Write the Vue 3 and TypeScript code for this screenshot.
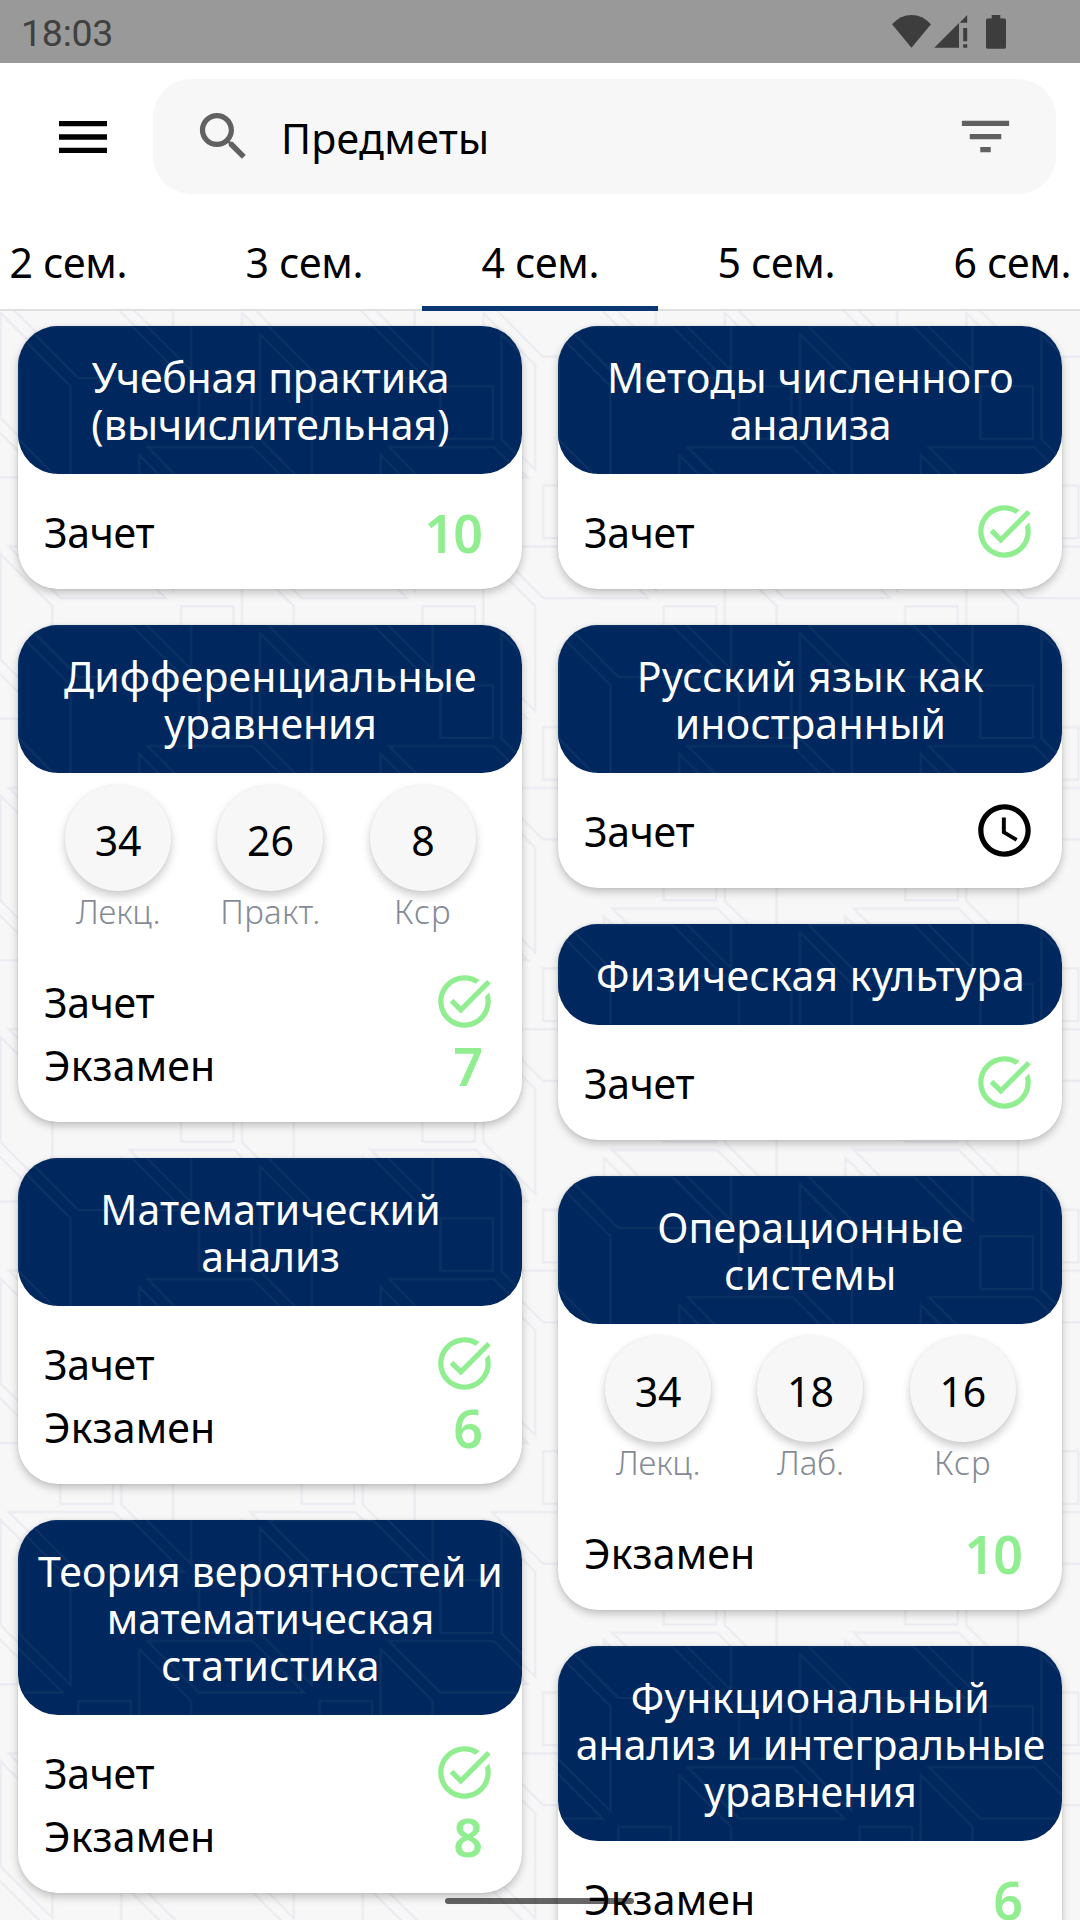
<script setup lang="ts">
interface Line { text: string; track: number }
interface Hours { value: string; label: string; track: number }
interface Result { kind: 'Зачет' | 'Экзамен'; mark?: string; state?: 'passed' | 'pending' }
interface Subject { title: Line[]; hours?: Hours[]; results: Result[] }

const line = (text: string, track = 0): Line => ({ text, track })
const hour = (value: string, label: string, track = 0): Hours => ({ value, label, track })
const passed: Result = { kind: 'Зачет', state: 'passed' }
const exam = (mark: string): Result => ({ kind: 'Экзамен', mark })

const columns: Subject[][] = [
  [
    { title: [line('Учебная практика', -0.18), line('(вычислительная)', 0.05)], results: [{ kind: 'Зачет', mark: '10' }] },
    {
      title: [line('Дифференциальные', 0.19), line('уравнения', -0.14)],
      hours: [hour('34', 'Лекц.', -0.16), hour('26', 'Практ.', 0.28), hour('8', 'Кср', 1)],
      results: [passed, exam('7')],
    },
    { title: [line('Математический', 0.12), line('анализ', -0.26)], results: [passed, exam('6')] },
    {
      title: [line('Теория вероятностей и', 0.1), line('математическая', -0.02), line('статистика', 0.4)],
      results: [passed, exam('8')],
    },
  ],
  [
    { title: [line('Методы численного', 0.3), line('анализа', -0.22)], results: [passed] },
    { title: [line('Русский язык как', 0.42), line('иностранный', 0.25)], results: [{ kind: 'Зачет', state: 'pending' }] },
    { title: [line('Физическая культура', 0.4)], results: [passed] },
    {
      title: [line('Операционные', 0.11), line('системы', 0.4)],
      hours: [hour('34', 'Лекц.', -0.16), hour('18', 'Лаб.', -0.16), hour('16', 'Кср', 1)],
      results: [exam('10')],
    },
    {
      title: [line('Функциональный', 0.5), line('анализ и интегральные', -0.02), line('уравнения', -0.14)],
      results: [exam('6')],
    },
  ],
]

const tabs = ['2 сем.', '3 сем.', '4 сем.', '5 сем.', '6 сем.']
const activeTab = 2

// The ornament repeats on a checkerboard lattice with this step.
const step = 120.7
const cells: string[] = []
for (let i = -3; i <= 2; i++) {
  for (let j = -3; j <= 2; j++) {
    if ((i + j) % 2 === 0) cells.push(`translate(${i * step} ${j * step})`)
  }
}
const ornaments = [
  { id: 'ornament-dark', y: 0 },
  { id: 'ornament-light', y: -6.3 },
]
</script>

<template>
  <div class="screen">
    <svg class="defs" width="0" height="0" aria-hidden="true">
      <defs>
        <pattern v-for="o in ornaments" :id="o.id" :key="o.id" :class="o.id" :y="o.y" :width="step * 2" :height="step * 2" patternUnits="userSpaceOnUse">
          <g v-for="c in cells" :key="c" :transform="c">
            <path d="M129.5 121H234.5L286.3 172.7H181Z" />
            <path d="M242 8.3L293.8 60V165L242 113.3Z" />
            <path d="M181 60.3H233.5V112.8H181Z" />
          </g>
        </pattern>
      </defs>
    </svg>

    <div class="status">
      <span class="clock">18:03</span>
      <svg class="status-icons" width="116" height="36" viewBox="891 13 116 36">
        <path d="M911.5 46.7L892 23.3Q900.5 14 911.5 14T931 23.3Z" />
        <path d="M934.3 46.8L959 22V46.8ZM959.6 21.8L967.2 14V21.8ZM963.2 27H967.2V40.2H963.2ZM963.2 43.3H967.2V46.8H963.2Z" />
        <path d="M991.7 14H1000.3V17.5H1004.2Q1006 17.5 1006 19.3V46Q1006 47.8 1004.2 47.8H987.8Q986 47.8 986 46V19.3Q986 17.5 987.8 17.5H991.7Z" />
      </svg>
    </div>

    <div class="appbar">
      <svg class="menu" viewBox="0 0 24 24"><path d="M3 18h18v-2H3v2zm0-5h18v-2H3v2zm0-7v2h18V6H3z" /></svg>
      <div class="search">
        <svg viewBox="0 0 24 24"><path d="M15.5 14h-.79l-.28-.27C15.41 12.59 16 11.11 16 9.5 16 5.91 13.09 3 9.5 3S3 5.91 3 9.5 5.91 16 9.5 16c1.61 0 3.09-.59 4.23-1.57l.27.28v.79l5 4.99L20.49 19l-4.99-5zm-6 0C7.01 14 5 11.99 5 9.5S7.01 5 9.5 5 14 7.01 14 9.5 11.99 14 9.5 14z" /></svg>
        <span class="query">Предметы</span>
        <svg viewBox="0 0 24 24"><path d="M10 18h4v-2h-4v2zM3 6v2h18V6H3zm3 7h12v-2H6v2z" /></svg>
      </div>
    </div>

    <nav class="tabs">
      <div v-for="(t, i) in tabs" :key="t" class="tab" :class="{ active: i === activeTab }">{{ t }}</div>
    </nav>

    <main class="content">
      <svg class="ornament" width="100%" height="100%"><rect width="100%" height="100%" fill="url(#ornament-light)" /></svg>
      <div v-for="(col, ci) in columns" :key="ci" class="column">
        <article v-for="(s, si) in col" :key="si" class="card">
          <header class="head">
            <svg class="ornament" width="100%" height="100%"><rect width="100%" height="100%" fill="url(#ornament-dark)" /></svg>
            <div v-for="l in s.title" :key="l.text" class="title" :style="{ letterSpacing: l.track + 'px' }">{{ l.text }}</div>
          </header>
          <div v-if="s.hours" class="hours">
            <div v-for="h in s.hours" :key="h.label" class="hour">
              <div class="bubble">{{ h.value }}</div>
              <div class="label" :style="{ letterSpacing: h.track + 'px' }">{{ h.label }}</div>
            </div>
          </div>
          <div class="results">
            <div v-for="r in s.results" :key="r.kind" class="row">
              <span class="kind" :class="r.kind === 'Зачет' ? 'credit' : 'exam'">{{ r.kind }}</span>
              <span v-if="r.mark" class="mark">{{ r.mark }}</span>
              <svg v-else-if="r.state === 'passed'" class="icon passed" viewBox="0 0 24 24"><path d="M22 5.18L10.59 16.6l-4.24-4.24 1.41-1.41 2.83 2.83 10-10L22 5.18zm-2.21 5.04c.13.57.21 1.17.21 1.78 0 4.42-3.58 8-8 8s-8-3.58-8-8 3.58-8 8-8c1.58 0 3.04.46 4.28 1.25l1.44-1.44C16.1 2.67 14.13 2 12 2 6.48 2 2 6.48 2 12s4.48 10 10 10 10-4.48 10-10c0-1.19-.22-2.33-.6-3.39l-1.61 1.61z" /></svg>
              <svg v-else class="icon" viewBox="0 0 24 24"><path d="M11.99 2C6.47 2 2 6.48 2 12s4.47 10 9.99 10C17.52 22 22 17.52 22 12S17.52 2 11.99 2zM12 20c-4.42 0-8-3.58-8-8s3.58-8 8-8 8 3.58 8 8-3.58 8-8 8zm.5-13H11v6l5.25 3.15.75-1.23-4.5-2.67z" /></svg>
            </div>
          </div>
        </article>
      </div>
    </main>
    <div class="home"></div>
  </div>
</template>

<style>
body { margin: 0; background: #fff; }
</style>

<style scoped>
.screen {
  position: relative;
  display: flex;
  flex-direction: column;
  width: 1080px;
  height: 1920px;
  overflow: hidden;
  background: #fff;
  color: #000;
  font: 41px "Noto Sans", "Open Sans", sans-serif;
}
.defs { position: absolute; }
.defs path { fill: none; stroke-width: 2.2; }
.ornament-dark path { stroke: #0c3264; }
.ornament-light path { stroke: #ebebf1; }

.status {
  display: flex;
  align-items: center;
  justify-content: space-between;
  box-sizing: border-box;
  flex: none;
  height: 63px;
  padding: 0 73px 0 21px;
  background: #999;
}
.clock { padding-top: 3px; font: 37.5px/44px Roboto, sans-serif; letter-spacing: -0.25px; color: #404040; }
.status-icons { display: block; fill: #3d3d3d; }

.appbar {
  display: flex;
  align-items: center;
  box-sizing: border-box;
  flex: none;
  height: 147px;
  padding: 0 24px 0 51px;
}
.menu { width: 64px; height: 64px; margin-right: 38px; }
.search {
  display: flex;
  flex: 1;
  align-items: center;
  box-sizing: border-box;
  height: 115px;
  padding: 0 39px;
  border-radius: 38px;
  background: #f7f7f7;
}
.search svg { width: 63px; height: 63px; flex: none; fill: #616161; }
.query { flex: 1; margin-left: 26px; line-height: 57px; padding-top: 3px; letter-spacing: 0.32px; }

.tabs {
  display: flex;
  justify-content: center;
  flex: none;
  height: 101px;
  background: linear-gradient(#e0e0e0, #e0e0e0) bottom / 100% 2.5px no-repeat;
}
.tab {
  box-sizing: border-box;
  flex: none;
  width: 236px;
  height: 101px;
  padding: 22px 0 0 1px;
  text-align: center;
  line-height: 60px;
  letter-spacing: -0.2px;
}
.tab.active { border-bottom: 5px solid #0a3672; }

.content {
  position: relative;
  display: flex;
  flex: 1;
  gap: 36px;
  min-height: 0;
  padding: 15px 18px 0;
  background: #f7f7f7;
}
.ornament { position: absolute; inset: 0; }
.column { position: relative; display: flex; flex: 1; flex-direction: column; gap: 36px; }
.card {
  flex: none;
  border-radius: 40px;
  background: #fff;
  box-shadow: 0 4px 9px rgba(0, 0, 0, 0.22), 0 0 3px rgba(0, 0, 0, 0.08);
}
.head {
  position: relative;
  overflow: hidden;
  padding: 28px 0 26px 1px;
  border-radius: 40px;
  background: #00275e;
  color: #fff;
}
.title { position: relative; height: 47px; line-height: 47px; text-align: center; white-space: nowrap; }

.hours { display: flex; justify-content: center; padding: 12px 0 14px 1px; }
.hour { display: flex; flex-direction: column; align-items: center; width: 152.4px; }
.bubble {
  box-sizing: border-box;
  width: 106px;
  height: 106px;
  padding-top: 2px;
  border-radius: 50%;
  background: #f7f7f7;
  box-shadow: 0 5px 10px rgba(0, 0, 0, 0.2), 0 0 3px rgba(0, 0, 0, 0.05);
  text-align: center;
  line-height: 106px;
}
.label { height: 39px; font-size: 33px; font-weight: 300; line-height: 41px; color: #858b96; }

.results { padding: 26px; }
.row { display: flex; align-items: center; justify-content: space-between; height: 63px; line-height: 63px; }
.kind { padding-top: 2px; }
.credit { letter-spacing: -0.35px; }
.exam { letter-spacing: 0.15px; }
.icon { display: block; width: 63px; height: 63px; }
.passed { fill: #90ee90; }
.mark { padding: 2px 14px 0 0; font-size: 52px; font-weight: 600; letter-spacing: -1px; color: #90ee90; }

.home {
  position: absolute;
  left: 445px;
  bottom: 16px;
  width: 189px;
  height: 6px;
  border-radius: 3px;
  background: rgba(0, 0, 0, 0.6);
}
</style>
